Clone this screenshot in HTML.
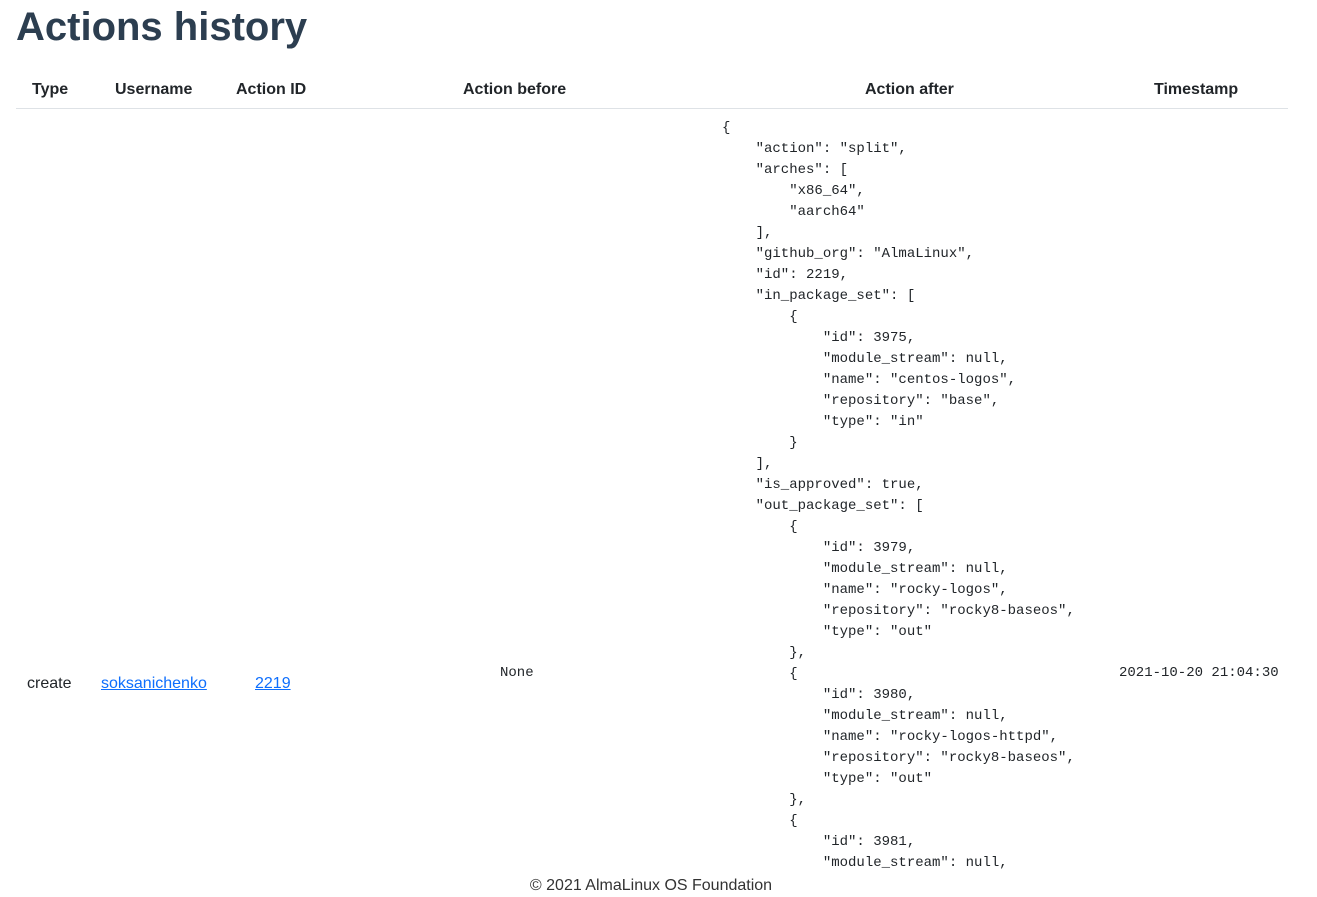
<!DOCTYPE html>
<html><head><meta charset="utf-8"><style>
body{margin:0;width:1317px;height:894px;overflow:hidden;background:#fff;font-family:"Liberation Sans",sans-serif;color:#212529;position:relative}
.a{position:absolute;white-space:nowrap}
h1{position:absolute;left:16px;top:5px;margin:0;font-size:40px;font-weight:bold;color:#2c3e50;letter-spacing:0px}
.th{font-weight:bold;font-size:16px;top:81px}
.line{position:absolute;left:16px;top:108px;width:1272px;height:1px;background:#dee2e6}
a{color:#0d6efd;text-decoration:underline}
pre{position:absolute;left:722px;top:118px;margin:0;font-family:"Liberation Mono",monospace;font-size:14px;line-height:21px;color:#212529}
.m{font-family:"Liberation Mono",monospace;font-size:14px}
</style></head><body>
<h1>Actions history</h1>
<div class="a th" style="left:32px">Type</div>
<div class="a th" style="left:115px">Username</div>
<div class="a th" style="left:236px">Action ID</div>
<div class="a th" style="left:463px">Action before</div>
<div class="a th" style="left:865px">Action after</div>
<div class="a th" style="left:1154px">Timestamp</div>
<div class="line"></div>
<div class="a" style="left:27px;top:675px;font-size:16px">create</div>
<div class="a" style="left:101px;top:675px;font-size:16px"><a>soksanichenko</a></div>
<div class="a" style="left:255px;top:675px;font-size:16px"><a>2219</a></div>
<div class="a m" style="left:500px;top:665px">None</div>
<div class="a m" style="left:1119px;top:665px">2021-10-20 21:04:30</div>
<pre>{
    "action": "split",
    "arches": [
        "x86_64",
        "aarch64"
    ],
    "github_org": "AlmaLinux",
    "id": 2219,
    "in_package_set": [
        {
            "id": 3975,
            "module_stream": null,
            "name": "centos-logos",
            "repository": "base",
            "type": "in"
        }
    ],
    "is_approved": true,
    "out_package_set": [
        {
            "id": 3979,
            "module_stream": null,
            "name": "rocky-logos",
            "repository": "rocky8-baseos",
            "type": "out"
        },
        {
            "id": 3980,
            "module_stream": null,
            "name": "rocky-logos-httpd",
            "repository": "rocky8-baseos",
            "type": "out"
        },
        {
            "id": 3981,
            "module_stream": null,
</pre>
<div class="a" style="left:0;width:1302px;text-align:center;top:877px;font-size:16px;color:#333;background:#fff;height:20px">© 2021 AlmaLinux OS Foundation</div>
</body></html>
